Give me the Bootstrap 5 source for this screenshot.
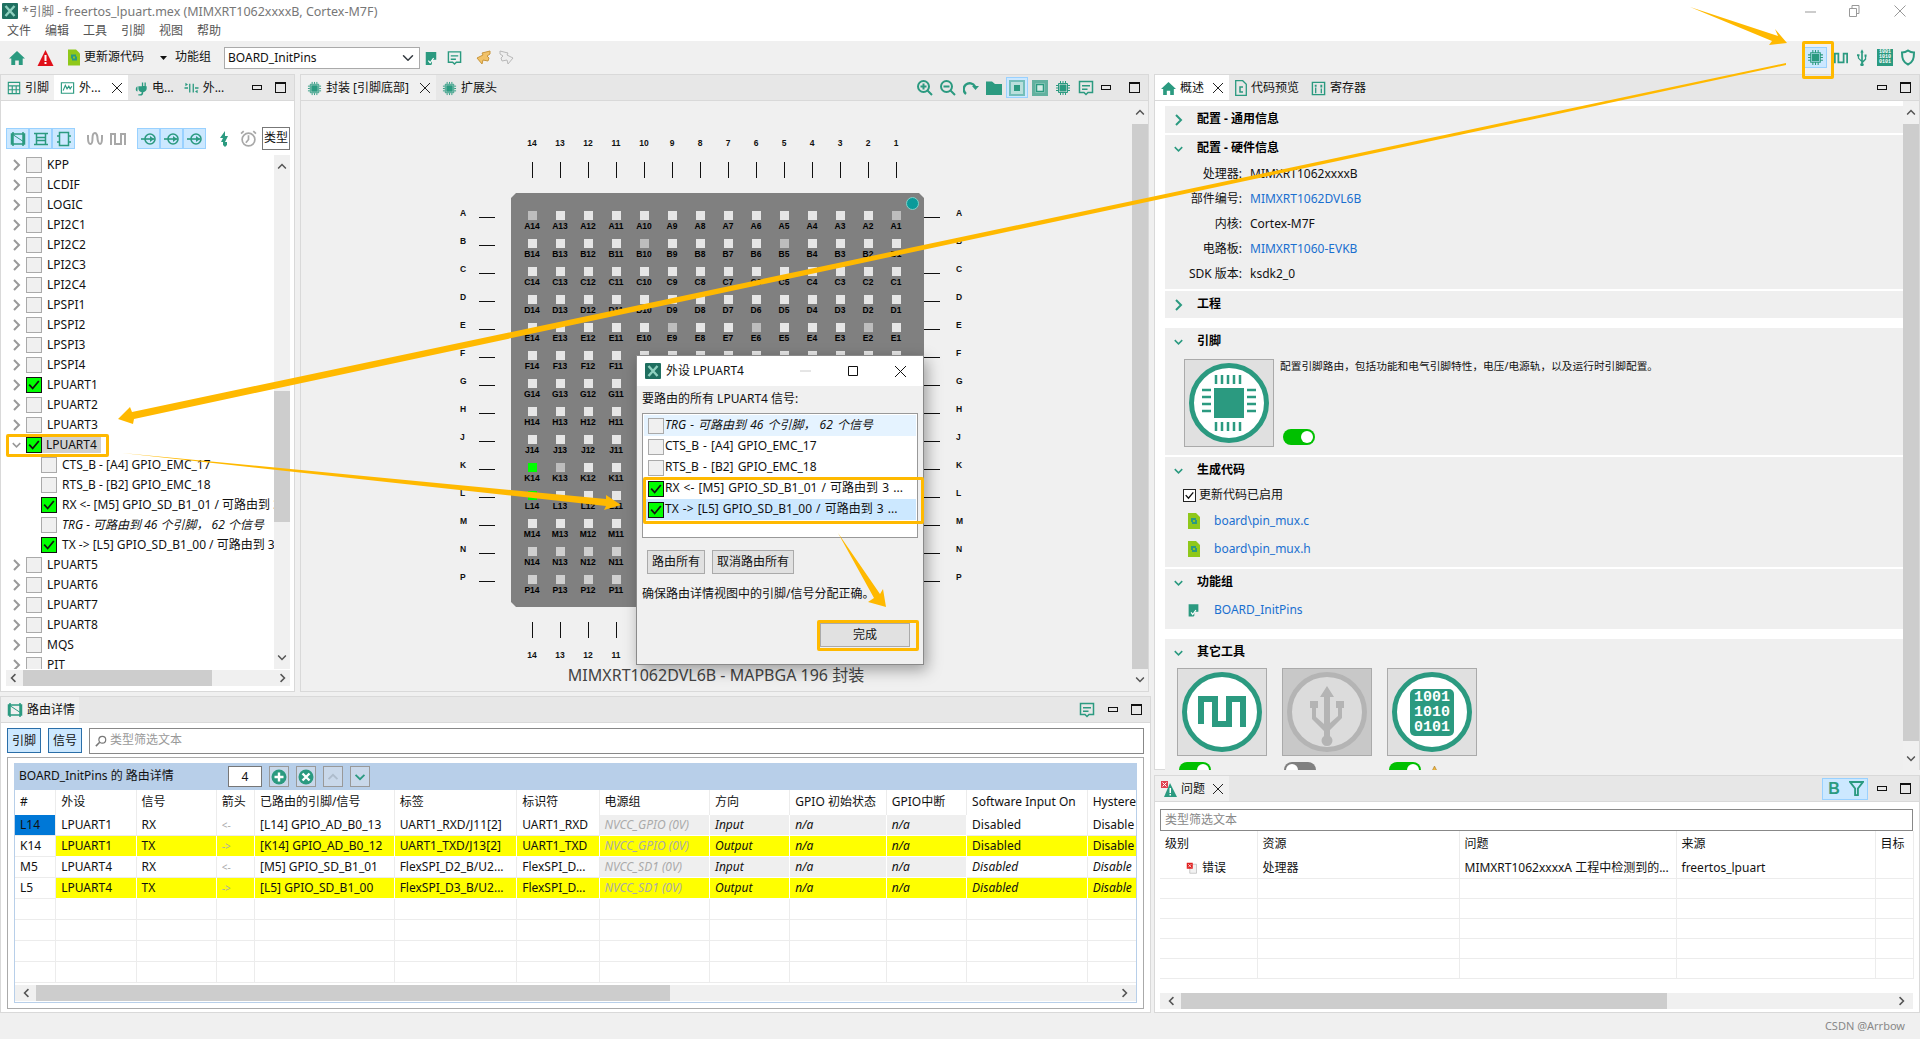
<!DOCTYPE html>
<html lang="zh">
<head>
<meta charset="UTF-8">
<title>引脚 - freertos_lpuart.mex</title>
<link href="https://cdn.jsdelivr.net/npm/bootstrap@5.3.3/dist/css/bootstrap.min.css" rel="stylesheet">
<style>
  html, body { margin: 0; height: 100%; overflow: hidden; }
  body { font: 12px/1.2 "Noto Sans", "Noto Sans CJK SC", sans-serif; color: #111; background: #f0f0f0; }
  svg { display: block; flex: none; }
  .ic { color: #2b9a80; }
  .ic-gray { color: #a8a8a8; }
  .win { width: 1920px; height: 1039px; position: relative; overflow: hidden; }

  /* title + menu */
  .ttl { height: 22px; background: #fff; color: #777; padding-left: 2px; font-size: 12.5px; }
  .ttl-ctl { margin-left: auto; gap: 33px; padding-right: 14px; color: #999; }
  .mnu { height: 19px; background: #fff; padding-left: 7px; gap: 14px; color: #555; }

  /* main toolbar */
  .tools { height: 33px; padding-left: 9px; }
  .combo { width: 196px; height: 22px; padding: 0 0 0 3px; font-size: 12px; border-radius: 0; border: 1px solid #aaa; background-position: right 3px center; color: #111; font-family: inherit; }
  .sel-btn { background: #cce8ff; border: 1px solid #99d1ff; }

  /* workbench */
  .wb { height: 939px; }
  .wb-l { width: 1151px; margin-right: 3px; }
  .wb-r { width: 766px; }
  .pane { border: 1px solid #d9d9d9; background: #fff; min-width: 0; }
  .tabs { height: 26px; background: #e7e7e7; border-bottom: 1px solid #d9d9d9; flex: none; }
  .tabx { height: 25px; padding: 1px 6px 0; gap: 4px; white-space: nowrap; }
  .tabx-on { background: #fff; }
  .tabx-soft { background: #f0f0f0; }
  .pane-ctl { margin-left: auto; gap: 13px; padding-right: 8px; }
  .mini { width: 10px; height: 5px; border: 1px solid #111; }
  .maxi { width: 11px; height: 11px; border: 1px solid #111; border-top-width: 2px; }

  .p-left { width: 295px; margin-right: 5px; }
  .p-center { width: 849px; }
  .bar-ic { height: 21px; margin: 27px 0 6px 5px; }
  .seg { width: 23px; height: 21px; }
  .type-btn { width: 28px; height: 23px; border: 1px solid #777; font-size: 12px; }

  /* tree */
  .tree-wrap { height: 514px; }
  .tree { width: 269px; overflow: hidden; }
  .trow { height: 20px; white-space: nowrap; padding-left: 7px; gap: 5px; }
  .trow-sub { padding-left: 36px; }
  .chev { width: 9px; flex: none; color: #999; }
  .cbx { width: 16px; height: 16px; border: 1px solid #aaa; background: #f0f0f0; flex: none; }
  .cbx-on { background: #00ff00; border-color: #111; color: #111; }
  .tsel { background: #d0d0d0; }
  .sb-v { width: 16px; background: #f0f0f0; flex: none; }
  .sb-h { height: 16px; background: #f0f0f0; }
  .thumb { background: #cdcdcd; }

  /* canvas */
  .canvas { background: #f0f0f0; height: 591px; position: relative; }
  .pkg { position: absolute; left: 129px; top: 37px; width: 704px; }
  .nums { display: grid; grid-template-columns: repeat(14, 28px); margin-left: 88px; text-align: center; font: 700 8.5px/10px "Liberation Sans", sans-serif; }
  .nums i { font-style: normal; }
  .tick { width: 1px; height: 16px; background: #111; margin: 0 auto; }
  .midrow { display: flex; }
  .side { width: 81px; display: grid; grid-template-rows: repeat(14, 28px); padding-top: 15px; font: 700 8.5px/10px "Liberation Sans", sans-serif; }
  .side div { display: flex; align-items: flex-start; }
  .side b { width: 49px; padding-left: 30px; line-height: 10px; }
  .side span { width: 16px; height: 1px; background: #111; margin-top: 9px; }
  .side-r b { order: 2; padding-left: 16px; }
  .side-r span { order: 1; }
  .chip { position: relative; width: 413px; height: 414px; background: #808080; padding: 18px 14px 4px 7px; display: grid; grid-template-columns: repeat(14, 28px); grid-auto-rows: 28px; clip-path: polygon(5px 0, 408px 0, 413px 5px, 413px 100%, 5px 100%, 0 409px, 0 5px); }
  .pin { text-align: center; font: 700 8.5px/10px "Liberation Sans", sans-serif; color: #000; }
  .pin u { display: block; width: 9px; height: 9px; background: #e6e6e6; margin: 0 auto 1px; }
  .pin-d u { background: #bdbdbd; }
  .pin-m u { background: #cfcfcf; }
  .pin-g u { background: #00ff00; }
  .dot1 { position: absolute; right: 5px; top: 4px; width: 13px; height: 13px; border-radius: 50%; background: #0b9a9a; border: 1px solid #7fd0c8; }
  .cap { position: absolute; left: 175px; top: 566px; width: 480px; text-align: center; font-size: 16px; line-height: 1; color: #444; }
  .sb-c { position: absolute; right: 0; top: 0; bottom: 0; }

  /* route table */
  .p-route { height: 317px; }
  .flt { padding: 5px 6px 4px; gap: 7px; height: 34px; }
  .flt-btn { width: 34px; height: 25px; background: #cce8ff; border: 1px solid #2a6ea8; text-align: center; line-height: 23px; }
  .flt-in { height: 26px; border: 1px solid #888; border-radius: 0; padding: 0 5px; background: #fff; color: #999; gap: 3px; }
  .frame { margin: 0 6px; height: 252px; border: 1px solid #aaa; padding: 5px 6px; }
  .band { height: 27px; background: #b8cfe9; padding-left: 5px; }
  .band-num { width: 34px; height: 21px; margin-left: 28px; margin-right: 7px; background: #fff; border: 1px solid #777; text-align: center; line-height: 19px; }
  .band-btn { width: 20px; height: 21px; border: 1px solid #999; margin-right: 7px; background: #c9d8ea; }
  .inner { height: 213px; border: 1px solid #b8cfe9; border-top: 0; }
  .rt-wrap { height: 195px; overflow: hidden; }
  .rt { table-layout: fixed; border-collapse: separate; border-spacing: 0; width: 1124px; }
  .rt th, .rt td { font-weight: 400; height: 21px; padding: 0 5px; white-space: nowrap; overflow: hidden; border-right: 1px solid #ececec; border-bottom: 1px solid #ececec; }
  .rt th { height: 25px; border-bottom: 0; }
  .rt .yl { background: #ffff00; border-right-color: #fff; border-bottom-color: #fff; }
  .rt .gr { background: #efefef; border-right-color: #fff; border-bottom-color: #fff; }
  .rt .sel-pin { background: #0078d7; }
  .it { font-style: italic; }
  .mut { color: #aaa; }
  .arrow-c { color: #aaa; font-size: 10px; }
  .c1 { width: 41px; } .c2, .c3, .c11 { width: 80px; } .c4 { width: 38px; } .c5 { width: 139px; } .c6 { width: 122px; }
  .c7 { width: 82px; } .c8 { width: 110px; } .c9 { width: 80px; } .c10 { width: 96px; } .c12 { width: 120px; } .c13 { width: 51px; }

  /* overview */
  .p-over { height: 696px; }
  .over { height: 669px; position: relative; }
  .secs { width: 748px; padding: 5px 0 0 10px; }
  .sec { background: #efefef; margin-bottom: 2px; }
  .sec-h { height: 27px; padding-left: 9px; gap: 14px; font-weight: 700; color: #000; }
  .chev-t { width: 9px; color: #2b9a80; flex: none; }
  .info { height: 25px; }
  .info-k { width: 77px; text-align: right; margin-right: 8px; }
  .lnk { color: #1a6fd0; text-decoration: none; }
  .big { width: 90px; height: 88px; border: 1px solid #aaa; background: #e0e0e0; }
  .big-off { background: #c8c8c8; }
  .desc { font-size: 10.7px; line-height: 14px; }
  .tog { width: 32px; height: 16px; border-radius: 8px; background: #00c000; position: relative; flex: none; }
  .tog::after { content: ""; position: absolute; right: 2px; top: 2px; width: 12px; height: 12px; border-radius: 50%; background: #fff; }
  .tog-off { background: #808080; }
  .tog-off::after { right: auto; left: 2px; }

  /* problems */
  .p-prob { height: 238px; margin-top: 5px; }
  .pb-in { margin: 7px 6px 0 5px; height: 22px; border: 1px solid #888; padding: 0 4px; color: #888; background: #fff; line-height: 20px; }
  .pt { table-layout: fixed; border-collapse: collapse; width: 753px; margin-left: 5px; }
  .pt th, .pt td { font-weight: 400; height: 20px; padding: 0 5px; border-right: 1px solid #ececec; border-bottom: 1px solid #ececec; white-space: nowrap; overflow: hidden; }
  .pt th { height: 27px; border-bottom: 0; }
  .p1 { width: 97px; } .p2 { width: 202px; } .p3 { width: 217px; } .p4 { width: 199px; } .p5 { width: 38px; }

  .foot { height: 26px; padding-right: 15px; color: #888; font-size: 11px; }

  /* dialog floats over the package view */
  .dlg { position: absolute; left: 636px; top: 355px; width: 288px; height: 310px; background: #f0f0f0; border: 1px solid #8a8a8a; box-shadow: 3px 5px 14px rgba(0,0,0,.35); }
  .dlg-t { height: 30px; background: #fff; padding-left: 8px; gap: 5px; }
  .dlg-l { padding: 6px 0 0 5px; height: 27px; }
  .dlg-box { margin: 0 5px; width: 276px; height: 125px; background: #fff; border: 1px solid #999; padding: 1px; }
  .dlg-r { height: 21px; padding-left: 4px; gap: 1px; white-space: nowrap; word-spacing: 1px; }
  .dlg-btn { height: 24px; border: 1px solid #aaa; background: #e1e1e1; padding: 0 4px; font-size: 12px; border-radius: 0; line-height: 1; color: #111; }
  .hl { position: absolute; border: 3px solid #ffb900; border-radius: 2px; pointer-events: none; }
  .fx { position: absolute; left: 0; top: 0; pointer-events: none; }
</style>
</head>
<body>

<svg class="d-none">
  <symbol id="s-home" viewBox="0 0 16 16"><path fill="currentColor" d="M8 1 16 8.500h-2.300V15H9.800v-4.500H6.200V15H2.300V8.500H0z"/></symbol>
  <symbol id="s-chip" viewBox="0 0 16 16"><path fill="currentColor" d="M4.500 4.500h7v7h-7z"/><path fill="none" stroke="currentColor" d="M3.500 3.500h9v9h-9zM5.500 1v2M8 1v2M10.500 1v2M5.500 13v2M8 13v2M10.500 13v2M1 5.500h2M1 8h2M1 10.500h2M13 5.500h2M13 8h2M13 10.500h2"/></symbol>
  <symbol id="s-grid" viewBox="0 0 16 16"><path fill="none" stroke="currentColor" stroke-width="1.300" d="M1.500 1.500h13v13h-13zM1.500 5.500h13M1.500 10h13M6 5.500v9M10.500 5.500v9"/></symbol>
  <symbol id="s-wave" viewBox="0 0 16 16"><path fill="none" stroke="currentColor" stroke-width="1.300" d="M1 2h14v12H1zM3 11l2.500-6 2 4 2-3 1.500 3 2-3"/></symbol>
  <symbol id="s-plug" viewBox="0 0 16 16"><path fill="currentColor" d="M9 1h1.500v4H12V1h1.500v4.500h1V8c0 2.500-2 4-4 4.300V13c0 1.500-1 3-3 3H5v-1.500h2c1 0 1.800-.6 1.800-1.600v-.6C6.500 12 5 10 5 8V5.500h4z"/><path fill="currentColor" d="M2 9c0-2 1-3 2-3.500v6C3 11 2 10.500 2 9z"/></symbol>
  <symbol id="s-swap" viewBox="0 0 16 16"><path fill="none" stroke="currentColor" stroke-width="1.500" d="M6 3v10M10 3v10M0 8h4M12 8h4"/><path fill="currentColor" d="M1 2l3 2-3 2zM15 10l-3 2 3 2z"/></symbol>
  <symbol id="s-flag" viewBox="0 0 16 16"><path fill="currentColor" d="M2 1h12v9H9v5l-1 1H2zM3.500 16V1"/><path fill="none" stroke="#fff" stroke-width="1.400" d="M5 11l2 2.500L11 8"/></symbol>
  <symbol id="s-note" viewBox="0 0 16 16"><path fill="none" stroke="currentColor" stroke-width="1.500" d="M1.500 1.500h13v11H10L8 14.500 6 12.500H1.500z"/><path fill="currentColor" d="M4 5h8v1.500H4zM4 8.500h5.500V10H4z"/></symbol>
  <symbol id="s-doc" viewBox="0 0 12 16"><path fill="#8fc81a" d="M0 0h8l4 4v12H0z"/><path fill="#2b9a80" d="M3 5h5v2H5v2H3zM9 11H4V9h3V7h2z"/></symbol>
  <symbol id="s-alert" viewBox="0 0 16 16"><path fill="#e0101a" d="M8 0 16 16H0z"/><path fill="#fff" d="M7 5h2v6H7zM7 12h2v2H7z"/></symbol>
  <symbol id="s-back" viewBox="0 0 16 16"><path fill="#f2c268" stroke="#c8963c" d="M14 1 6 3l1 2-6 3 5 6 1-4 5 1 1-3-2-2 3-2z"/></symbol>
  <symbol id="s-fwd" viewBox="0 0 16 16"><path fill="#eee" stroke="#b8b8b8" d="M2 1l8 2-1 2 6 3-5 6-1-4-5 1-1-3 2-2-3-2z"/></symbol>
  <symbol id="s-check" viewBox="0 0 16 16"><path fill="none" stroke="currentColor" stroke-width="2" d="M2.500 7.500 6.500 12 13.500 3.500"/></symbol>
  <symbol id="s-r" viewBox="0 0 9 12"><path fill="none" stroke="currentColor" stroke-width="2" d="M2 1l5 5-5 5"/></symbol>
  <symbol id="s-d" viewBox="0 0 12 9"><path fill="none" stroke="currentColor" stroke-width="2" d="M1 2l5 5 5-5"/></symbol>
  <symbol id="s-logo" viewBox="0 0 16 16"><path fill="#1f6f60" d="M0 1a1 1 0 0 1 1-1h14a1 1 0 0 1 1 1v14a1 1 0 0 1-1 1H1a1 1 0 0 1-1-1z"/><path fill="none" stroke="#8fd0bf" stroke-width="2.400" d="M3.500 3 12.500 13M12.500 3 3.500 13"/></symbol>
  <symbol id="s-sq1" viewBox="0 0 16 16"><path fill="none" stroke="currentColor" stroke-width="1.500" d="M1.500 3h13v10h-13zM3 1v14M13 1v14"/><path stroke="currentColor" d="M2 3 14 11" /></symbol>
  <symbol id="s-sq2" viewBox="0 0 16 16"><path fill="none" stroke="currentColor" stroke-width="1.500" d="M1 2.500h14M1 13.500h14M3.500 2.500v11M12.500 2.500v11M3.500 6.500h9M3.500 9.500h9"/></symbol>
  <symbol id="s-sq3" viewBox="0 0 16 16"><path fill="none" stroke="currentColor" stroke-width="1.500" d="M3.500 1.500h9v13h-9zM1 5h2.500M1 11h2.500M12.500 5H15M12.500 11H15"/></symbol>
  <symbol id="s-sig" viewBox="0 0 16 16"><circle cx="9" cy="8" r="5" fill="none" stroke="currentColor" stroke-width="1.600"/><path stroke="currentColor" stroke-width="1.600" d="M0 8h13"/><path fill="currentColor" d="M9 5l4 3-4 3z"/></symbol>
  <symbol id="s-squig" viewBox="0 0 16 16"><path fill="none" stroke="currentColor" stroke-width="2" d="M1 4v3c0 3 1 6 2.500 6S5.500 10 5.500 7 6.500 2 8 2s2.500 3 2.500 5 1 6 2.500 6S15 10 15 7V4"/></symbol>
  <symbol id="s-pulse" viewBox="0 0 16 16"><path fill="currentColor" d="M0 2h6v10h4V2h6v12h-2V4h-2v10H4V4H2v10H0z"/></symbol>
  <symbol id="s-bolt" viewBox="0 0 12 16"><path fill="currentColor" d="M7 0 2 7h3L3 11h2v3l2 2 2-2V11H7l3-6H7z"/></symbol>
  <symbol id="s-clock" viewBox="0 0 16 16"><circle cx="8" cy="9" r="6" fill="none" stroke="currentColor" stroke-width="1.600"/><path fill="none" stroke="currentColor" stroke-width="1.600" d="M8 5v4l-2.500 3M1 3.500 3.500 1M15 3.500 12.500 1"/></symbol>
  <symbol id="s-plus" viewBox="0 0 16 16"><circle cx="8" cy="8" r="7.500" fill="currentColor"/><path fill="none" stroke="#fff" stroke-width="2.400" d="M8 3.500v9M3.500 8h9"/></symbol>
  <symbol id="s-x" viewBox="0 0 16 16"><circle cx="8" cy="8" r="7.500" fill="currentColor"/><path fill="none" stroke="#fff" stroke-width="2.400" d="M4.500 4.500l7 7M11.500 4.500l-7 7"/></symbol>
  <symbol id="s-zin" viewBox="0 0 16 16"><circle cx="6.500" cy="6.500" r="5.500" fill="none" stroke="currentColor" stroke-width="2"/><path fill="none" stroke="currentColor" stroke-width="2" d="M10.500 10.500 15 15M3.500 6.500h6M6.500 3.500v6"/></symbol>
  <symbol id="s-zout" viewBox="0 0 16 16"><circle cx="6.500" cy="6.500" r="5.500" fill="none" stroke="currentColor" stroke-width="2"/><path fill="none" stroke="currentColor" stroke-width="2" d="M10.500 10.500 15 15M3.500 6.500h6"/></symbol>
  <symbol id="s-rot" viewBox="0 0 16 16"><path fill="none" stroke="currentColor" stroke-width="2.400" d="M3 14A6 6 0 1 1 12 6.500"/><path fill="currentColor" d="M9 6h7l-3.500 4z"/></symbol>
  <symbol id="s-fold" viewBox="0 0 16 16"><path fill="currentColor" d="M0 1.500h6L9 4h7v11H0z"/></symbol>
  <symbol id="s-box" viewBox="0 0 16 16"><path fill="currentColor" opacity=".55" d="M0 0h16v16H0z"/><path fill="#fff" opacity=".5" d="M2 2h12v12H2z"/><path fill="currentColor" d="M5 5h6v6H5z"/></symbol>
  <symbol id="s-box2" viewBox="0 0 16 16"><path fill="currentColor" opacity=".7" d="M0 0h16v16H0z"/><path fill="#d5ebe5" d="M3.500 3.500h9v9h-9z"/><path fill="none" stroke="currentColor" stroke-width="1.500" d="M4.500 4.500h7v7h-7z"/></symbol>
  <symbol id="s-cdoc" viewBox="0 0 12 16"><path fill="none" stroke="currentColor" stroke-width="1.300" d="M.7.700h7l3.600 3.600v11H.7z"/><path fill="none" stroke="currentColor" stroke-width="1.500" d="M8 7H5v5h3"/></symbol>
  <symbol id="s-reg" viewBox="0 0 16 16"><path fill="none" stroke="currentColor" stroke-width="1.500" d="M1.500 1.500h13v13h-13z"/><path fill="currentColor" d="M4 4h2v2H4zM10 4h2v3h-2zM4.300 7h1.400v6H4.300zM10.300 8h1.400v5h-1.400z"/></symbol>
  <symbol id="s-usb" viewBox="0 0 12 20"><path fill="currentColor" d="M6 0l2 4H7v10l2.500-2.500V9H9V6.500h2.500V9H11v3.500l-4 4V17a2 2 0 1 1-2 0v-2L1 11V8.500H0V6h3v2.500h-.5v2L5 13V4H4z"/></symbol>
  <symbol id="s-shield" viewBox="0 0 16 16"><path fill="none" stroke="currentColor" stroke-width="2" d="M8 1c2 1.500 4 2 6 2 0 6-1 9.500-6 12C3 12.500 2 9 2 3c2 0 4-.5 6-2z"/></symbol>
  <symbol id="s-filter" viewBox="0 0 16 16"><path fill="none" stroke="currentColor" stroke-width="2" d="M1 1h14L9.500 8v7h-3V8z"/></symbol>
  <symbol id="s-prob" viewBox="0 0 16 16"><path fill="#2b9a80" d="M9 2l7 14H3z"/><path fill="#fff" d="M8.500 7h1.500v5H8.500zM8.500 13h1.500v1.500H8.500z"/><path fill="#e04050" d="M0 0h7v7H0z"/><path stroke="#fff" d="M1.500 1.500l4 4M5.500 1.500l-4 4"/></symbol>
  <symbol id="s-err" viewBox="0 0 16 16"><path fill="#f2f2f2" stroke="#bbb" d="M5 3h9v12H5z"/><path fill="#e02020" d="M1 1h8v8H1z"/><path stroke="#fff" d="M3 3l4 4M7 3 3 7"/></symbol>
  <symbol id="s-search" viewBox="0 0 14 14"><circle cx="8.500" cy="5.500" r="4" fill="none" stroke="currentColor" stroke-width="1.400"/><path stroke="currentColor" stroke-width="1.800" d="M5.500 8.500 1 13"/></symbol>
</svg>

<div class="win d-flex flex-column">

  <div class="ttl d-flex align-items-center">
    <svg width="16" height="16" class="me-1"><use href="#s-logo"/></svg>
    <span>*引脚 - freertos_lpuart.mex (MIMXRT1062xxxxB, Cortex-M7F)</span>
    <div class="ttl-ctl d-flex align-items-center">
      <svg width="11" height="11"><path stroke="#999" d="M0 6h11"/></svg>
      <svg width="12" height="12"><path fill="none" stroke="#999" d="M.5 3.500h7v8h-7zM3 3V.5h7v8H8"/></svg>
      <svg width="12" height="12"><path stroke="#999" d="M.5.500l11 11M11.500.500l-11 11"/></svg>
    </div>
  </div>
  <div class="mnu d-flex align-items-center"><span>文件</span><span>编辑</span><span>工具</span><span>引脚</span><span>视图</span><span>帮助</span></div>

  <div class="tools d-flex align-items-center">
    <svg class="ic me-2" width="16" height="16"><use href="#s-home"/></svg>
    <svg class="ms-1" width="17" height="16"><use href="#s-alert"/></svg>
    <svg style="margin-left:14px" width="12" height="17"><use href="#s-doc"/></svg>
    <span class="ms-1">更新源代码</span>
    <svg class="ms-3 me-1" width="7" height="4" viewBox="0 0 7 4"><path fill="#111" d="M0 0h7L3.500 4z"/></svg>
    <span style="margin-left:4px">功能组</span>
    <select class="form-select combo" style="margin-left:13px"><option>BOARD_InitPins</option></select>
    <svg class="ic" style="margin-left:4px" width="14" height="16"><use href="#s-flag"/></svg>
    <svg class="ic" style="margin-left:9px" width="15" height="16"><use href="#s-note"/></svg>
    <svg style="margin-left:14px" width="16" height="16"><use href="#s-back"/></svg>
    <svg style="margin-left:6px" width="16" height="16"><use href="#s-fwd"/></svg>
    <div class="d-flex align-items-center ms-auto" style="padding-right:4px">
      <span class="sel-btn d-flex align-items-center justify-content-center" style="width:23px;height:21px"><svg class="ic" width="17" height="17"><use href="#s-chip"/></svg></span>
      <svg class="ic" style="margin-left:7px" width="14" height="14"><use href="#s-pulse"/></svg>
      <svg class="ic" style="margin-left:9px" width="10" height="17"><use href="#s-usb"/></svg>
      <span class="d-flex flex-column align-items-center justify-content-center" style="margin-left:10px;width:16px;height:17px;background:#2b9a80;color:#fff;font:700 5px/5px 'Liberation Mono',monospace">1001<br>1010<br>0101</span>
      <svg class="ic" style="margin-left:7px" width="16" height="17"><use href="#s-shield"/></svg>
    </div>
  </div>

  <div class="wb d-flex">
    <div class="wb-l d-flex flex-column">
      <div class="d-flex" style="height:618px">

        <div class="pane p-left d-flex flex-column">
          <div class="tabs d-flex">
            <div class="tabx tabx-soft d-flex align-items-center" style="width:53px"><svg class="ic" width="14" height="14"><use href="#s-grid"/></svg><span>引脚</span></div>
            <div class="tabx tabx-on d-flex align-items-center" style="width:74px"><svg class="ic" width="15" height="14"><use href="#s-wave"/></svg><span>外...</span><svg class="ms-auto" width="10" height="10"><path stroke="#222" d="M0 0l10 10M10 0 0 10"/></svg></div>
            <div class="tabx d-flex align-items-center"><svg class="ic" width="14" height="15"><use href="#s-plug"/></svg><span>电...</span></div>
            <div class="tabx d-flex align-items-center ps-1"><svg class="ic" width="15" height="14"><use href="#s-swap"/></svg><span>外...</span></div>
            <div class="pane-ctl d-flex align-items-center"><i class="mini"></i><i class="maxi"></i></div>
          </div>
          <div class="bar-ic d-flex align-items-center">
            <div class="d-flex">
              <span class="seg sel-btn d-flex align-items-center justify-content-center"><svg class="ic" width="16" height="16"><use href="#s-sq1"/></svg></span>
              <span class="seg sel-btn d-flex align-items-center justify-content-center"><svg class="ic" width="16" height="16"><use href="#s-sq2"/></svg></span>
              <span class="seg sel-btn d-flex align-items-center justify-content-center"><svg class="ic" width="16" height="16"><use href="#s-sq3"/></svg></span>
            </div>
            <svg class="ic-gray" style="margin-left:12px" width="16" height="16"><use href="#s-squig"/></svg>
            <svg class="ic-gray" style="margin-left:7px" width="16" height="16"><use href="#s-pulse"/></svg>
            <div class="d-flex" style="margin-left:11px">
              <span class="seg sel-btn d-flex align-items-center justify-content-center"><svg class="ic" width="16" height="16"><use href="#s-sig"/></svg></span>
              <span class="seg sel-btn d-flex align-items-center justify-content-center"><svg class="ic" width="16" height="16"><use href="#s-sig"/></svg></span>
              <span class="seg sel-btn d-flex align-items-center justify-content-center"><svg class="ic" width="16" height="16"><use href="#s-sig"/></svg></span>
            </div>
            <svg class="ic" style="margin-left:12px" width="12" height="16"><use href="#s-bolt"/></svg>
            <svg class="ic-gray" style="margin-left:10px" width="17" height="17"><use href="#s-clock"/></svg>
            <span class="type-btn d-flex align-items-center justify-content-center" style="margin-left:5px">类型</span>
          </div>
          <div class="tree-wrap d-flex ps-1" style="padding-right:4px">
            <div class="tree">
              <div class="trow d-flex align-items-center"><svg class="chev" height="12"><use href="#s-r"/></svg><i class="cbx"></i><span>KPP</span></div>
              <div class="trow d-flex align-items-center"><svg class="chev" height="12"><use href="#s-r"/></svg><i class="cbx"></i><span>LCDIF</span></div>
              <div class="trow d-flex align-items-center"><svg class="chev" height="12"><use href="#s-r"/></svg><i class="cbx"></i><span>LOGIC</span></div>
              <div class="trow d-flex align-items-center"><svg class="chev" height="12"><use href="#s-r"/></svg><i class="cbx"></i><span>LPI2C1</span></div>
              <div class="trow d-flex align-items-center"><svg class="chev" height="12"><use href="#s-r"/></svg><i class="cbx"></i><span>LPI2C2</span></div>
              <div class="trow d-flex align-items-center"><svg class="chev" height="12"><use href="#s-r"/></svg><i class="cbx"></i><span>LPI2C3</span></div>
              <div class="trow d-flex align-items-center"><svg class="chev" height="12"><use href="#s-r"/></svg><i class="cbx"></i><span>LPI2C4</span></div>
              <div class="trow d-flex align-items-center"><svg class="chev" height="12"><use href="#s-r"/></svg><i class="cbx"></i><span>LPSPI1</span></div>
              <div class="trow d-flex align-items-center"><svg class="chev" height="12"><use href="#s-r"/></svg><i class="cbx"></i><span>LPSPI2</span></div>
              <div class="trow d-flex align-items-center"><svg class="chev" height="12"><use href="#s-r"/></svg><i class="cbx"></i><span>LPSPI3</span></div>
              <div class="trow d-flex align-items-center"><svg class="chev" height="12"><use href="#s-r"/></svg><i class="cbx"></i><span>LPSPI4</span></div>
              <div class="trow d-flex align-items-center"><svg class="chev" height="12"><use href="#s-r"/></svg><i class="cbx cbx-on"><svg width="14" height="14"><use href="#s-check"/></svg></i><span>LPUART1</span></div>
              <div class="trow d-flex align-items-center"><svg class="chev" height="12"><use href="#s-r"/></svg><i class="cbx"></i><span>LPUART2</span></div>
              <div class="trow d-flex align-items-center"><svg class="chev" height="12"><use href="#s-r"/></svg><i class="cbx"></i><span>LPUART3</span></div>
              <div class="trow d-flex align-items-center"><svg class="chev" height="12" viewBox="0 0 12 9"><use href="#s-d"/></svg><span class="tsel d-flex align-items-center gap-1" style="padding-right:4px"><i class="cbx cbx-on"><svg width="14" height="14"><use href="#s-check"/></svg></i><span>LPUART4</span></span></div>
              <div class="trow trow-sub d-flex align-items-center"><i class="cbx"></i><span>CTS_B - [A4] GPIO_EMC_17</span></div>
              <div class="trow trow-sub d-flex align-items-center"><i class="cbx"></i><span>RTS_B - [B2] GPIO_EMC_18</span></div>
              <div class="trow trow-sub d-flex align-items-center"><i class="cbx cbx-on"><svg width="14" height="14"><use href="#s-check"/></svg></i><span>RX &lt;- [M5] GPIO_SD_B1_01 / 可路由到 3 个引脚</span></div>
              <div class="trow trow-sub d-flex align-items-center"><i class="cbx"></i><span class="it">TRG - 可路由到 46 个引脚， 62 个信号</span></div>
              <div class="trow trow-sub d-flex align-items-center"><i class="cbx cbx-on"><svg width="14" height="14"><use href="#s-check"/></svg></i><span>TX -&gt; [L5] GPIO_SD_B1_00 / 可路由到 3 个引脚</span></div>
              <div class="trow d-flex align-items-center"><svg class="chev" height="12"><use href="#s-r"/></svg><i class="cbx"></i><span>LPUART5</span></div>
              <div class="trow d-flex align-items-center"><svg class="chev" height="12"><use href="#s-r"/></svg><i class="cbx"></i><span>LPUART6</span></div>
              <div class="trow d-flex align-items-center"><svg class="chev" height="12"><use href="#s-r"/></svg><i class="cbx"></i><span>LPUART7</span></div>
              <div class="trow d-flex align-items-center"><svg class="chev" height="12"><use href="#s-r"/></svg><i class="cbx"></i><span>LPUART8</span></div>
              <div class="trow d-flex align-items-center"><svg class="chev" height="12"><use href="#s-r"/></svg><i class="cbx"></i><span>MQS</span></div>
              <div class="trow d-flex align-items-center"><svg class="chev" height="12"><use href="#s-r"/></svg><i class="cbx"></i><span>PIT</span></div>
            </div>
            <div class="sb-v d-flex flex-column">
              <svg class="mx-auto my-2" width="10" height="7" viewBox="0 0 12 9" style="transform:rotate(180deg);color:#555"><use href="#s-d"/></svg>
              <div class="thumb" style="height:131px;margin-top:213px"></div>
              <svg class="mx-auto mt-auto mb-2" width="10" height="7" viewBox="0 0 12 9" style="color:#555"><use href="#s-d"/></svg>
            </div>
          </div>
          <div class="sb-h d-flex align-items-center" style="margin:1px 4px 0 5px">
            <svg class="ms-1" width="7" height="10" viewBox="0 0 9 12" style="transform:scaleX(-1);color:#555"><use href="#s-r"/></svg>
            <div class="thumb h-100" style="width:189px;margin-left:6px"></div>
            <svg class="ms-auto me-1" width="7" height="10" viewBox="0 0 9 12" style="color:#555"><use href="#s-r"/></svg>
          </div>
        </div>

        <div class="pane p-center d-flex flex-column">
          <div class="tabs d-flex">
            <div class="tabx tabx-soft d-flex align-items-center" style="width:135px"><svg class="ic" width="15" height="15"><use href="#s-chip"/></svg><span>封装 [引脚底部]</span><svg class="ms-auto" width="10" height="10"><path stroke="#222" d="M0 0l10 10M10 0 0 10"/></svg></div>
            <div class="tabx d-flex align-items-center"><svg class="ic" width="15" height="15"><use href="#s-chip"/></svg><span>扩展头</span></div>
            <div class="d-flex align-items-center ms-auto" style="gap:7px;padding-right:8px">
              <svg class="ic" width="16" height="16"><use href="#s-zin"/></svg>
              <svg class="ic" width="16" height="16"><use href="#s-zout"/></svg>
              <svg class="ic" width="16" height="16"><use href="#s-rot"/></svg>
              <svg class="ic" width="16" height="16"><use href="#s-fold"/></svg>
              <span class="sel-btn d-flex align-items-center justify-content-center" style="width:22px;height:21px;margin:0 -3px"><svg class="ic" width="16" height="16"><use href="#s-box"/></svg></span>
              <svg class="ic" width="16" height="16"><use href="#s-box2"/></svg>
              <svg class="ic" width="16" height="16"><use href="#s-chip"/></svg>
              <svg class="ic" width="16" height="16"><use href="#s-note"/></svg>
              <i class="mini"></i><span style="width:4px"></span><i class="maxi"></i>
            </div>
          </div>
          <div class="canvas">
            <div class="pkg" id="pkg"></div>
            <div class="cap">MIMXRT1062DVL6B - MAPBGA 196 封装</div>
            <div class="sb-v sb-c d-flex flex-column">
              <svg class="mx-auto my-2" width="10" height="7" viewBox="0 0 12 9" style="transform:rotate(180deg);color:#555"><use href="#s-d"/></svg>
              <div class="thumb" style="height:545px"></div>
              <svg class="mx-auto mt-auto mb-2" width="10" height="7" viewBox="0 0 12 9" style="color:#555"><use href="#s-d"/></svg>
            </div>
          </div>
        </div>
      </div>

      <div class="pane p-route d-flex flex-column" style="margin-top:4px">
        <div class="tabs d-flex">
          <div class="tabx tabx-soft d-flex align-items-center" style="width:78px"><svg class="ic" width="16" height="16"><use href="#s-sq1"/></svg><span>路由详情</span></div>
          <div class="pane-ctl d-flex align-items-center"><svg class="ic" width="16" height="16"><use href="#s-note"/></svg><i class="mini"></i><i class="maxi"></i></div>
        </div>
        <div class="flt d-flex align-items-center">
          <span class="flt-btn">引脚</span><span class="flt-btn">信号</span>
          <div class="flt-in flex-grow-1 d-flex align-items-center"><svg width="12" height="12" style="color:#777"><use href="#s-search"/></svg><span>类型筛选文本</span></div>
        </div>
        <div class="frame">
          <div class="band d-flex align-items-center">
            <span style="width:181px">BOARD_InitPins 的 路由详情</span>
            <span class="band-num">4</span>
            <span class="band-btn d-flex align-items-center justify-content-center"><svg class="ic" width="16" height="16"><use href="#s-plus"/></svg></span>
            <span class="band-btn d-flex align-items-center justify-content-center"><svg class="ic" width="16" height="16"><use href="#s-x"/></svg></span>
            <span class="band-btn d-flex align-items-center justify-content-center"><svg width="12" height="8" viewBox="0 0 12 9" style="transform:rotate(180deg);color:#aebccc"><use href="#s-d"/></svg></span>
            <span class="band-btn d-flex align-items-center justify-content-center"><svg class="ic" width="12" height="8" viewBox="0 0 12 9"><use href="#s-d"/></svg></span>
          </div>
          <div class="inner">
            <div class="rt-wrap">
              <table class="rt">
                <colgroup><col class="c1"><col class="c2"><col class="c3"><col class="c4"><col class="c5"><col class="c6"><col class="c7"><col class="c8"><col class="c9"><col class="c10"><col class="c11"><col class="c12"><col class="c13"></colgroup>
                <tr><th>#</th><th>外设</th><th>信号</th><th>箭头</th><th>已路由的引脚/信号</th><th>标签</th><th>标识符</th><th>电源组</th><th>方向</th><th>GPIO 初始状态</th><th>GPIO中断</th><th>Software Input On</th><th>Hystere</th></tr>
                <tr><td class="sel-pin">L14</td><td>LPUART1</td><td>RX</td><td class="arrow-c">&lt;-</td><td>[L14] GPIO_AD_B0_13</td><td>UART1_RXD/J11[2]</td><td>UART1_RXD</td><td class="gr it mut">NVCC_GPIO (0V)</td><td class="gr it">Input</td><td class="gr it">n/a</td><td class="gr it">n/a</td><td>Disabled</td><td>Disable</td></tr>
                <tr><td>K14</td><td class="yl">LPUART1</td><td class="yl">TX</td><td class="yl arrow-c">-&gt;</td><td class="yl">[K14] GPIO_AD_B0_12</td><td class="yl">UART1_TXD/J13[2]</td><td class="yl">UART1_TXD</td><td class="yl it mut">NVCC_GPIO (0V)</td><td class="yl it">Output</td><td class="yl it">n/a</td><td class="yl it">n/a</td><td class="yl">Disabled</td><td class="yl">Disable</td></tr>
                <tr><td>M5</td><td>LPUART4</td><td>RX</td><td class="arrow-c">&lt;-</td><td>[M5] GPIO_SD_B1_01</td><td>FlexSPI_D2_B/U2...</td><td>FlexSPI_D...</td><td class="gr it mut">NVCC_SD1 (0V)</td><td class="gr it">Input</td><td class="gr it">n/a</td><td class="gr it">n/a</td><td class="it">Disabled</td><td class="it">Disable</td></tr>
                <tr><td>L5</td><td class="yl">LPUART4</td><td class="yl">TX</td><td class="yl arrow-c">-&gt;</td><td class="yl">[L5] GPIO_SD_B1_00</td><td class="yl">FlexSPI_D3_B/U2...</td><td class="yl">FlexSPI_D...</td><td class="yl it mut">NVCC_SD1 (0V)</td><td class="yl it">Output</td><td class="yl it">n/a</td><td class="yl it">n/a</td><td class="yl it">Disabled</td><td class="yl it">Disable</td></tr>
                <tr><td></td><td></td><td></td><td></td><td></td><td></td><td></td><td></td><td></td><td></td><td></td><td></td><td></td></tr>
                <tr><td></td><td></td><td></td><td></td><td></td><td></td><td></td><td></td><td></td><td></td><td></td><td></td><td></td></tr>
                <tr><td></td><td></td><td></td><td></td><td></td><td></td><td></td><td></td><td></td><td></td><td></td><td></td><td></td></tr>
                <tr><td></td><td></td><td></td><td></td><td></td><td></td><td></td><td></td><td></td><td></td><td></td><td></td><td></td></tr>
              </table>
            </div>
            <div class="sb-h d-flex align-items-center">
              <svg class="ms-2" width="7" height="10" viewBox="0 0 9 12" style="transform:scaleX(-1);color:#555"><use href="#s-r"/></svg>
              <div class="thumb h-100" style="width:634px;margin-left:6px"></div>
              <svg class="ms-auto me-2" width="7" height="10" viewBox="0 0 9 12" style="color:#555"><use href="#s-r"/></svg>
            </div>
          </div>
        </div>
      </div>
    </div>

    <div class="wb-r d-flex flex-column">
      <div class="pane p-over d-flex flex-column">
        <div class="tabs d-flex">
          <div class="tabx tabx-on d-flex align-items-center" style="width:74px"><svg class="ic" width="15" height="15"><use href="#s-home"/></svg><span>概述</span><svg class="ms-auto" width="10" height="10"><path stroke="#222" d="M0 0l10 10M10 0 0 10"/></svg></div>
          <div class="tabx d-flex align-items-center"><svg class="ic" width="12" height="16"><use href="#s-cdoc"/></svg><span>代码预览</span></div>
          <div class="tabx d-flex align-items-center"><svg class="ic" width="15" height="15"><use href="#s-reg"/></svg><span>寄存器</span></div>
          <div class="pane-ctl d-flex align-items-center"><i class="mini"></i><i class="maxi"></i></div>
        </div>
        <div class="over d-flex">
          <div class="secs overflow-hidden">
            <div class="sec"><div class="sec-h d-flex align-items-center"><svg class="chev-t" height="12"><use href="#s-r"/></svg><span>配置 - 通用信息</span></div></div>
            <div class="sec" style="height:154px">
              <div class="sec-h d-flex align-items-center"><svg class="chev-t" height="12" viewBox="0 0 12 9"><use href="#s-d"/></svg><span>配置 - 硬件信息</span></div>
              <div class="info d-flex align-items-center"><span class="info-k">处理器:</span><span>MIMXRT1062xxxxB</span></div>
              <div class="info d-flex align-items-center"><span class="info-k">部件编号:</span><a class="lnk" href="#">MIMXRT1062DVL6B</a></div>
              <div class="info d-flex align-items-center"><span class="info-k">内核:</span><span>Cortex-M7F</span></div>
              <div class="info d-flex align-items-center"><span class="info-k">电路板:</span><a class="lnk" href="#">MIMXRT1060-EVKB</a></div>
              <div class="info d-flex align-items-center"><span class="info-k">SDK 版本:</span><span>ksdk2_0</span></div>
            </div>
            <div class="sec" style="margin-bottom:10px"><div class="sec-h d-flex align-items-center"><svg class="chev-t" height="12"><use href="#s-r"/></svg><span>工程</span></div></div>
            <div class="sec" style="height:127px">
              <div class="sec-h d-flex align-items-center"><svg class="chev-t" height="12" viewBox="0 0 12 9"><use href="#s-d"/></svg><span>引脚</span></div>
              <div class="d-flex" style="padding-left:19px;margin-top:4px">
                <div class="big d-flex align-items-center justify-content-center">
                  <svg width="80" height="80" viewBox="0 0 80 80"><circle cx="40" cy="40" r="37.500" fill="#fff" stroke="#2b9a80" stroke-width="5"/><rect x="24" y="24" width="32" height="32" fill="#2b9a80" stroke="#fff" stroke-width="2"/><path fill="none" stroke="#2b9a80" stroke-width="2.500" d="M27 12v9M33 12v9M39 12v9M45 12v9M51 12v9M27 59v9M33 59v9M39 59v9M45 59v9M51 59v9M13 27h9M13 34h9M13 41h9M13 48h9M58 27h9M58 34h9M58 41h9M58 48h9"/></svg>
                </div>
                <div class="d-flex flex-column" style="margin-left:6px">
                  <span class="desc">配置引脚路由，包括功能和电气引脚特性，电压/电源轨，以及运行时引脚配置。</span>
                  <span class="tog" style="margin-top:56px;margin-left:3px"></span>
                </div>
              </div>
            </div>
            <div class="sec" style="height:110px">
              <div class="sec-h d-flex align-items-center"><svg class="chev-t" height="12" viewBox="0 0 12 9"><use href="#s-d"/></svg><span>生成代码</span></div>
              <div class="d-flex align-items-center" style="padding-left:18px;height:23px;gap:3px"><i class="d-flex align-items-center justify-content-center" style="width:13px;height:13px;border:1px solid #222;background:#fff"><svg width="11" height="11"><use href="#s-check"/></svg></i><span>更新代码已启用</span></div>
              <div class="d-flex align-items-center" style="padding-left:23px;height:28px;gap:14px"><svg width="12" height="16"><use href="#s-doc"/></svg><a class="lnk" href="#">board\pin_mux.c</a></div>
              <div class="d-flex align-items-center" style="padding-left:23px;height:28px;gap:14px"><svg width="12" height="16"><use href="#s-doc"/></svg><a class="lnk" href="#">board\pin_mux.h</a></div>
            </div>
            <div class="sec" style="height:60px;margin-bottom:10px">
              <div class="sec-h d-flex align-items-center"><svg class="chev-t" height="12" viewBox="0 0 12 9"><use href="#s-d"/></svg><span>功能组</span></div>
              <div class="d-flex align-items-center" style="padding-left:22px;height:28px;gap:14px"><svg class="ic" width="13" height="16"><use href="#s-flag"/></svg><a class="lnk" href="#">BOARD_InitPins</a></div>
            </div>
            <div class="sec" style="height:160px">
              <div class="sec-h d-flex align-items-center"><svg class="chev-t" height="12" viewBox="0 0 12 9"><use href="#s-d"/></svg><span>其它工具</span></div>
              <div class="d-flex" style="padding-left:12px;gap:15px;margin-top:2px">
                <div class="d-flex flex-column">
                  <div class="big d-flex align-items-center justify-content-center"><svg width="80" height="80" viewBox="0 0 80 80"><circle cx="40" cy="40" r="37.500" fill="#fff" stroke="#2b9a80" stroke-width="5"/><path fill="none" stroke="#2b9a80" stroke-width="6" d="M19 52V27h14v25h14V27h14v28"/></svg></div>
                  <span class="tog" style="margin:6px 0 0 2px"></span>
                </div>
                <div class="d-flex flex-column">
                  <div class="big big-off d-flex align-items-center justify-content-center"><svg width="80" height="80" viewBox="0 0 80 80"><circle cx="40" cy="40" r="37.500" fill="#dcdcdc" stroke="#b4b4b4" stroke-width="5"/><path fill="#b4b4b4" d="M40 14l7 11h-4v26l8-7v-8h-2v-7h8v7h-2v10L43 58v6a5.500 5.500 0 1 1-6 0v-5L25 47V36h-2v-7h8v7h-2v9l8 7V25h-4z"/></svg></div>
                  <span class="tog tog-off" style="margin:6px 0 0 2px"></span>
                </div>
                <div class="d-flex flex-column position-relative">
                  <div class="big d-flex align-items-center justify-content-center">
                    <span class="d-flex align-items-center justify-content-center" style="width:80px;height:80px;border-radius:50%;background:#fff;border:5px solid #2b9a80">
                      <span style="background:#2b9a80;color:#fff;border-radius:5px;padding:1px 4px;font:700 15px/15px 'Liberation Mono',monospace;text-align:center">1001<br>1010<br>0101</span>
                    </span>
                  </div>
                  <div class="d-flex align-items-center" style="margin:6px 0 0 2px;gap:9px">
                    <span class="tog"></span>
                    <svg width="9" height="10" viewBox="0 0 16 16"><path fill="#f0b840" stroke="#a07020" d="M8 1 15 15H1z"/></svg>
                  </div>
                </div>
              </div>
            </div>
          </div>
          <div class="sb-v d-flex flex-column ms-auto">
            <svg class="mx-auto my-2" width="10" height="7" viewBox="0 0 12 9" style="transform:rotate(180deg);color:#555"><use href="#s-d"/></svg>
            <div class="thumb" style="height:617px"></div>
            <svg class="mx-auto mt-auto mb-2" width="10" height="7" viewBox="0 0 12 9" style="color:#555"><use href="#s-d"/></svg>
          </div>
        </div>
      </div>

      <div class="pane p-prob d-flex flex-column">
        <div class="tabs d-flex">
          <div class="tabx tabx-soft d-flex align-items-center" style="width:74px"><svg width="16" height="16"><use href="#s-prob"/></svg><span>问题</span><svg class="ms-auto" width="10" height="10"><path stroke="#222" d="M0 0l10 10M10 0 0 10"/></svg></div>
          <div class="pane-ctl d-flex align-items-center">
            <div class="d-flex sel-btn" style="height:22px;margin-right:-4px">
              <span class="ic d-flex align-items-center justify-content-center" style="width:22px;font:700 16px/1 'Liberation Sans',sans-serif">B</span>
              <span class="d-flex align-items-center justify-content-center" style="width:22px"><svg class="ic" width="15" height="15"><use href="#s-filter"/></svg></span>
            </div>
            <i class="mini"></i><i class="maxi"></i>
          </div>
        </div>
        <div class="pb-in">类型筛选文本</div>
        <table class="pt">
          <colgroup><col class="p1"><col class="p2"><col class="p3"><col class="p4"><col class="p5"></colgroup>
          <tr><th>级别</th><th>资源</th><th>问题</th><th>来源</th><th>目标</th></tr>
          <tr><td><span class="d-flex align-items-center gap-1" style="padding-left:21px"><svg width="12" height="12"><use href="#s-err"/></svg>错误</span></td><td>处理器</td><td class="text-truncate">MIMXRT1062xxxxA 工程中检测到的...</td><td>freertos_lpuart</td><td></td></tr>
          <tr><td></td><td></td><td></td><td></td><td></td></tr>
          <tr><td></td><td></td><td></td><td></td><td></td></tr>
          <tr><td></td><td></td><td></td><td></td><td></td></tr>
          <tr><td></td><td></td><td></td><td></td><td></td></tr>
          <tr><td></td><td></td><td></td><td></td><td></td></tr>
        </table>
        <div class="sb-h d-flex align-items-center" style="margin:14px 6px 0 5px">
          <svg class="ms-2" width="7" height="10" viewBox="0 0 9 12" style="transform:scaleX(-1);color:#555"><use href="#s-r"/></svg>
          <div class="thumb h-100" style="width:486px;margin-left:6px"></div>
          <svg class="ms-auto me-2" width="7" height="10" viewBox="0 0 9 12" style="color:#555"><use href="#s-r"/></svg>
        </div>
      </div>
    </div>
  </div>

  <div class="foot d-flex align-items-center justify-content-end">CSDN @Arrbow</div>

  <!-- dialog over the package view -->
  <div class="dlg">
    <div class="dlg-t d-flex align-items-center">
      <svg width="16" height="16"><use href="#s-logo"/></svg>
      <span>外设 LPUART4</span>
      <div class="d-flex align-items-center ms-auto" style="gap:37px;padding-right:17px">
        <svg width="11" height="2"><path stroke="#ccc" d="M0 1h11"/></svg>
        <svg width="10" height="10"><path fill="none" stroke="#111" d="M.5.500h9v9h-9z"/></svg>
        <svg width="11" height="11"><path stroke="#111" d="M0 0l11 11M11 0 0 11"/></svg>
      </div>
    </div>
    <div class="dlg-l">要路由的所有 LPUART4 信号:</div>
    <div class="dlg-box">
      <div class="dlg-r d-flex align-items-center" style="background:#e5f3ff"><i class="cbx"></i><span class="it">TRG - 可路由到 46 个引脚， 62 个信号</span></div>
      <div class="dlg-r d-flex align-items-center"><i class="cbx"></i><span>CTS_B - [A4] GPIO_EMC_17</span></div>
      <div class="dlg-r d-flex align-items-center"><i class="cbx"></i><span>RTS_B - [B2] GPIO_EMC_18</span></div>
      <div class="dlg-r d-flex align-items-center"><i class="cbx cbx-on"><svg width="14" height="14"><use href="#s-check"/></svg></i><span>RX &lt;- [M5] GPIO_SD_B1_01 / 可路由到 3 ...</span></div>
      <div class="dlg-r d-flex align-items-center" style="background:#cce8ff"><i class="cbx cbx-on"><svg width="14" height="14"><use href="#s-check"/></svg></i><span>TX -&gt; [L5] GPIO_SD_B1_00 / 可路由到 3 ...</span></div>
    </div>
    <div class="d-flex" style="gap:7px;padding:12px 0 0 10px">
      <button class="btn dlg-btn" style="width:58px">路由所有</button>
      <button class="btn dlg-btn" style="width:82px">取消路由所有</button>
    </div>
    <div style="padding:13px 0 0 5px">确保路由详情视图中的引脚/信号分配正确。</div>
    <div class="d-flex justify-content-end" style="padding:22px 13px 0 0">
      <button class="btn dlg-btn" style="width:90px">完成</button>
    </div>
  </div>

  <!-- callout boxes and arrows drawn on top of the screenshot -->
  <div class="hl" style="left:6px;top:434px;width:103px;height:23px"></div>
  <div class="hl" style="left:1802px;top:41px;width:32px;height:38px"></div>
  <div class="hl" style="left:643px;top:477px;width:281px;height:47px"></div>
  <div class="hl" style="left:817px;top:620px;width:102px;height:31px"></div>
  <svg class="fx" width="1920" height="1039">
    <g fill="#ffb900">
      <path d="M1690 7 1778 36 1775 29 1787 43 1769 45 1772 41z"/>
      <path d="M1786 63 1786 65 134 419 133 424 118 419 130 407 132 412z"/>
      <path d="M122 453 606 499 606 495 621 505 604 510 606 506z"/>
      <path d="M838 533 880 594 883 589 886 607 868 602 874 598z"/>
    </g>
  </svg>
</div>

<script>
  // package view: rows A..P, balls 14..1
  const rows = 'ABCDEFGHJKLMNP'.split('');
  const dark = ['A14', 'A1', 'B10', 'B5', 'E9', 'E6', 'E2', 'K13'];
  const green = ['K14', 'L14'];
  const nums = Array.from({ length: 14 }, (_, i) => 14 - i);

  const numRow = '<div class="nums">' + nums.map(n => `<i>${n}</i>`).join('') + '</div>';
  const tickRow = '<div class="nums" style="margin-top:14px">' + nums.map(() => '<div class="tick"></div>').join('') + '</div>';
  const side = cls => `<div class="side ${cls}">` + rows.map(r => `<div><b>${r}</b><span></span></div>`).join('') + '</div>';

  // balls behind the dialog (rows F..P, columns 10..1) keep no label
  let pins = '';
  rows.forEach((r, ri) => nums.forEach(n => {
    const id = r + n;
    let cls = 'pin';
    if (green.includes(id)) cls += ' pin-g';
    else if (dark.includes(id)) cls += ' pin-d';
    else if (r === 'N' || r === 'P') cls += ' pin-m';
    const label = (ri >= 5 && n <= 10) ? '' : id;
    pins += `<div class="${cls}"><u></u>${label}</div>`;
  }));

  document.getElementById('pkg').innerHTML =
    numRow + tickRow +
    '<div class="midrow" style="margin-top:15px">' + side('') +
    `<div class="chip">${pins}<div class="dot1"></div></div>` + side('side-r') + '</div>' +
    '<div class="nums" style="margin-top:15px">' + nums.map(() => '<div class="tick"></div>').join('') + '</div>' +
    '<div class="nums" style="margin-top:12px">' + nums.map(n => `<i>${n > 10 ? n : ''}</i>`).join('') + '</div>';
</script>
<script src="https://cdn.jsdelivr.net/npm/bootstrap@5.3.3/dist/js/bootstrap.bundle.min.js"></script>
</body>
</html>
